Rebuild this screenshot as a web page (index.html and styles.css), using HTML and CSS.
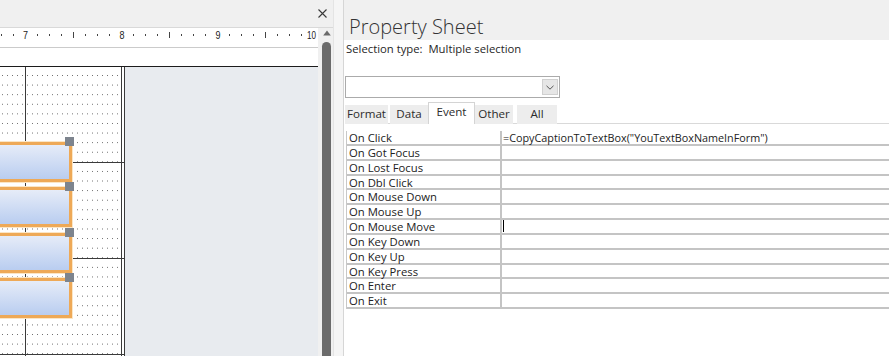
FILE: index.html
```html
<!DOCTYPE html>
<html lang="en">
<head>
<meta charset="utf-8">
<title>Property Sheet</title>
<link rel="stylesheet" href="styles.css">
</head>
<body>
<div class="app">
  <section class="designer">
    <div class="doc-bar">
      <svg class="close" width="9" height="9" viewBox="0 0 9 9"><path d="M0.5 0.5L8.5 8.5M8.5 0.5L0.5 8.5" stroke="#3a3a3a" stroke-width="1.1" fill="none"/></svg>
    </div>
    <div class="doc-body">
      <div class="doc-main">
        <div class="ruler">
          <svg width="318" height="19" viewBox="0 0 318 19">
            <g fill="#444">
              <rect x="1" y="6" width="1" height="2"/><rect x="13" y="6" width="1" height="2"/>
              <rect x="37" y="6" width="1" height="2"/><rect x="49" y="6" width="1" height="2"/><rect x="61" y="6" width="1" height="2"/><rect x="73" y="4" width="1" height="6"/><rect x="85" y="6" width="1" height="2"/><rect x="97" y="6" width="1" height="2"/><rect x="109" y="6" width="1" height="2"/>
              <rect x="133" y="6" width="1" height="2"/><rect x="145" y="6" width="1" height="2"/><rect x="157" y="6" width="1" height="2"/><rect x="169" y="4" width="1" height="6"/><rect x="181" y="6" width="1" height="2"/><rect x="193" y="6" width="1" height="2"/><rect x="205" y="6" width="1" height="2"/>
              <rect x="229" y="6" width="1" height="2"/><rect x="241" y="6" width="1" height="2"/><rect x="253" y="6" width="1" height="2"/><rect x="265" y="4" width="1" height="6"/><rect x="277" y="6" width="1" height="2"/><rect x="289" y="6" width="1" height="2"/><rect x="301" y="6" width="1" height="2"/>
            </g>
            <g class="ruler-num" fill="#222">
              <text x="23" y="11" textLength="5" lengthAdjust="spacingAndGlyphs">7</text>
              <text x="119.5" y="11" textLength="5" lengthAdjust="spacingAndGlyphs">8</text>
              <text x="215.5" y="11" textLength="5" lengthAdjust="spacingAndGlyphs">9</text>
              <text x="307" y="11" textLength="9" lengthAdjust="spacingAndGlyphs">10</text>
            </g>
          </svg>
        </div>
        <div class="sec-head"></div>
        <div class="canvas">
          <div class="form-area">
            <div class="ctl-stack">
              <div class="ctl"><span class="handle"></span></div>
              <div class="ctl"><span class="handle"></span></div>
              <div class="ctl"><span class="handle"></span></div>
              <div class="ctl"><span class="handle"></span></div>
            </div>
          </div>
          <div class="edge"></div>
          <div class="outside"></div>
        </div>
      </div>
      <div class="vscroll">
        <svg class="arrow-up" width="8" height="6" viewBox="0 0 8 6"><path d="M4 0.5L7.8 5.5H0.2Z" fill="#6a6a6a"/></svg>
        <div class="thumb"></div>
      </div>
    </div>
  </section>
  <div class="splitter"></div>
  <section class="props">
    <div class="props-title">Property Sheet</div>
    <div class="props-body">
      <div class="sel-type">Selection type:  Multiple selection</div>
      <div class="combo">
        <div class="combo-btn">
          <svg width="8" height="5" viewBox="0 0 8 5"><path d="M0.5 0.8L4 4.2L7.5 0.8" stroke="#555" stroke-width="1" fill="none"/></svg>
        </div>
      </div>
      <div class="tabs">
        <div class="tab tab-format">Format</div>
        <div class="tab tab-data">Data</div>
        <div class="tab tab-event active">Event</div>
        <div class="tab tab-other">Other</div>
        <div class="tab tab-all">All</div>
      </div>
      <div class="grid">
        <div class="row"><div class="lbl">On Click</div><div class="val">=CopyCaptionToTextBox("YouTextBoxNameInForm")</div></div>
        <div class="row"><div class="lbl">On Got Focus</div><div class="val"></div></div>
        <div class="row"><div class="lbl">On Lost Focus</div><div class="val"></div></div>
        <div class="row"><div class="lbl">On Dbl Click</div><div class="val"></div></div>
        <div class="row"><div class="lbl">On Mouse Down</div><div class="val"></div></div>
        <div class="row"><div class="lbl">On Mouse Up</div><div class="val"></div></div>
        <div class="row"><div class="lbl">On Mouse Move</div><div class="val"><span class="caret"></span></div></div>
        <div class="row"><div class="lbl">On Key Down</div><div class="val"></div></div>
        <div class="row"><div class="lbl">On Key Up</div><div class="val"></div></div>
        <div class="row"><div class="lbl">On Key Press</div><div class="val"></div></div>
        <div class="row"><div class="lbl">On Enter</div><div class="val"></div></div>
        <div class="row"><div class="lbl">On Exit</div><div class="val"></div></div>
      </div>
    </div>
  </section>
</div>
</body>
</html>
```

FILE: styles.css
```css
* { box-sizing: border-box; }
html, body { margin: 0; padding: 0; }
body {
  width: 889px;
  height: 356px;
  overflow: hidden;
  background: #fff;
  color: #222;
  font-family: "Open Sans", "Noto Sans", sans-serif;
  font-size: 11.5px;
}
.app { display: flex; height: 356px; }

/* ---------- left: form designer ---------- */
.designer { width: 333px; display: flex; flex-direction: column; }
.doc-bar {
  height: 28px;
  background: #f0f0f0;
  border-bottom: 1px solid #d9d9d9;
  display: flex;
  justify-content: flex-end;
  align-items: center;
  padding-right: 6px;
}
.close { display: block; }
.doc-body { flex: 1; display: flex; min-height: 0; }
.doc-main { width: 318px; display: flex; flex-direction: column; }
.ruler { height: 20px; background: #fff; border-bottom: 1px solid #cbcbcb; }
.ruler svg { display: block; }
.ruler-num text { font-family: "Liberation Sans", sans-serif; font-size: 11px; }
.sec-head { height: 18px; background: #fff; }
.canvas { flex: 1; display: flex; border-top: 1px solid #1c1c1c; min-height: 0; }
.form-area {
  width: 122px;
  border-right: 1px solid #3a3a3a;
  overflow: hidden;
  background:
    linear-gradient(to bottom, transparent 95px, #3a3a3a 95px) 0 0 / 100% 96px repeat-y,
    linear-gradient(#3a3a3a, #3a3a3a) 25px 0 / 1px 100% no-repeat,
    conic-gradient(at 1px 1px, transparent 75%, #6e6e6e 0) 2px 8px / 5px 9.6px,
    #fff;
}
.edge {
  width: 3px;
  border-right: 1px solid #3a3a3a;
  background: linear-gradient(to bottom, transparent 95px, #3a3a3a 95px) 0 0 / 100% 96px repeat-y, #fff;
}
.outside { flex: 1; background: #e8ebef; }

.ctl-stack {
  padding-top: 75px;
  display: flex;
  flex-direction: column;
  gap: 5.4px;
}
.ctl {
  position: relative;
  margin-left: -10px;
  width: 82px;
  height: 40px;
  border: 3px solid #eea957;
  box-shadow: 0 0 0 1px #fbe6c6;
  background: linear-gradient(to bottom, #e6ecf8, #b9cdf0);
}
.handle {
  position: absolute;
  top: -8px;
  right: -5px;
  width: 9px;
  height: 9px;
  background: #7d848e;
}
.vscroll {
  width: 15px;
  background: #f0f0f0;
  display: flex;
  flex-direction: column;
  align-items: flex-start;
}
.arrow-up { display: block; margin: 2px 0 0 5px; }
.thumb {
  flex: 1;
  width: 9px;
  margin: 6px 0 0 4px;
  background: #6b6b6b;
  border-radius: 5px 5px 0 0;
}
.splitter {
  width: 10px;
  background: #f5f5f5;
  border-left: 1px solid #e4e4e4;
}

/* ---------- right: property sheet ---------- */
.props {
  flex: 1;
  display: flex;
  flex-direction: column;
  border-left: 1px solid #d6d6d6;
  background: #fff;
  min-width: 0;
}
.props-title {
  height: 40px;
  flex: none;
  background: #f0f0f0;
  padding: 14px 0 0 5px;
  font-size: 20px;
  font-weight: 300;
  line-height: 26px;
  color: #333;
  overflow: hidden;
}
.props-body { flex: 1; display: flex; flex-direction: column; padding-left: 2px; }
.sel-type { margin-top: 1px; line-height: 15px; font-size: 11.3px; white-space: pre; color: #262626; }
.combo {
  margin: 20px 0 0 -1px;
  width: 215px;
  height: 22px;
  border: 1px solid #ababab;
  display: flex;
  justify-content: flex-end;
  align-items: center;
  padding-right: 1px;
}
.combo-btn {
  width: 16px;
  height: 16px;
  background: #e6e6e6;
  border: 1px solid #d0d0d0;
  display: flex;
  align-items: center;
  justify-content: center;
}
.combo-btn svg { display: block; }
.tabs {
  margin: 4px 0 0 -1px;
  height: 22px;
  display: flex;
  align-items: flex-end;
  border-bottom: 1px solid #d9d9d9;
}
.tab {
  height: 19px;
  line-height: 18px;
  text-align: center;
  background: #ededed;
  color: #2c2c2c;
  margin-bottom: -1px;
  font-size: 11.6px;
}
.tab-format { width: 43px; margin-right: 2px; }
.tab-data { width: 38px; }
.tab-event { width: 47px; }
.tab-other { width: 38px; margin-right: 4px; }
.tab-all { width: 40px; }
.tab.active {
  height: 22px;
  line-height: 17px;
  background: #fff;
  border: 1px solid #d4d4d4;
  border-bottom: none;
}
.grid { margin-top: 7px; border-left: 1px solid #c8c8c8; }
.row {
  display: flex;
  height: 14.85px;
  border-bottom: 2px solid #c4c4c4;
  line-height: 13px;
}
.lbl {
  width: 155px;
  padding-left: 2px;
  border-right: 2px solid #c4c4c4;
  white-space: nowrap;
  color: #222;
  font-size: 11.3px;
}
.val { flex: 1; padding-left: 1px; white-space: nowrap; color: #222; font-size: 10.8px; }
.caret {
  display: inline-block;
  width: 1px;
  height: 12px;
  background: #000;
  vertical-align: top;
  margin-top: 0;
}
```
